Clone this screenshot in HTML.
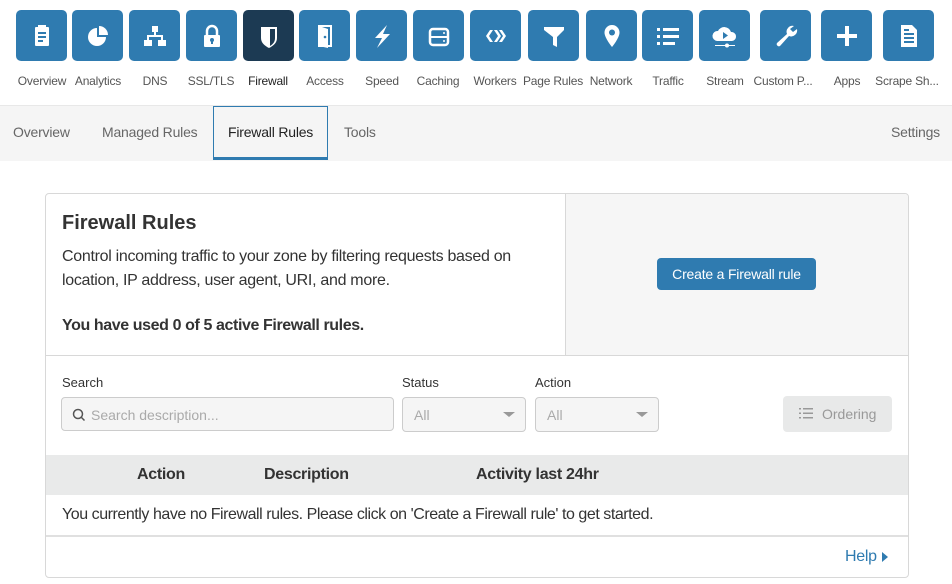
<!DOCTYPE html>
<html><head><meta charset="utf-8"><style>
*{box-sizing:border-box;margin:0;padding:0}
body{width:952px;height:584px;background:#fff;font-family:"Liberation Sans",sans-serif;color:#333;position:relative;overflow:hidden}
.a{position:absolute}
.tile{position:absolute;top:10px;width:51px;height:51px;border-radius:5px;background:#2f7bb0;display:flex;align-items:center;justify-content:center}
.tile svg{width:28px;height:28px}
.lbl{position:absolute;top:74px;font-size:12px;color:#555;text-align:center;width:70px;white-space:nowrap;letter-spacing:-0.2px}
.tab{position:absolute;top:124px;font-size:14px;color:#666;letter-spacing:-0.2px}
.sel{position:absolute;border:1px solid #ccc;border-radius:4px;background:#f5f5f5;color:#aaa;font-size:14px}
.tri{position:absolute;right:10px;top:14px;width:0;height:0;border-left:6px solid transparent;border-right:6px solid transparent;border-top:5px solid #999}
</style></head><body>
<!-- tiles -->
<div class="tile" style="left:16px"><svg viewBox="0 0 28 28" fill="#fff"><rect x="7" y="5" width="14" height="19" rx="1"/><rect x="10" y="3" width="8" height="4" fill="#fff"/><g fill="#2f7bb0"><rect x="10" y="10" width="8" height="2"/><rect x="10" y="14" width="8" height="2"/><rect x="10" y="18" width="5" height="2"/></g></svg></div>
<div class="tile" style="left:72px"><svg viewBox="0 0 28 28" fill="#fff"><path d="M13 6a9 9 0 1 0 9 9h-9z"/><path d="M15 4v9h9a9 9 0 0 0-9-9z"/></svg></div>
<div class="tile" style="left:129px"><svg viewBox="0 0 28 28" fill="#fff"><rect x="11" y="4" width="6" height="6"/><rect x="13" y="10" width="2" height="4"/><rect x="6" y="13" width="16" height="2"/><rect x="6" y="13" width="2" height="5"/><rect x="20" y="13" width="2" height="5"/><rect x="3" y="18" width="8" height="6"/><rect x="17" y="18" width="8" height="6"/></svg></div>
<div class="tile" style="left:186px"><svg viewBox="0 0 28 28"><path d="M9 13V9a5 5 0 0 1 10 0v4" fill="none" stroke="#fff" stroke-width="2.5"/><rect x="6" y="13" width="16" height="12" rx="1" fill="#fff"/><circle cx="14" cy="18" r="2" fill="#2f7bb0"/><rect x="13" y="18" width="2" height="4" fill="#2f7bb0"/></svg></div>
<div class="tile" style="left:243px;background:#1c3a53"><svg viewBox="0 0 28 28"><path d="M6 5h16v11c0 5-4 8-8 10-4-2-8-5-8-10z" fill="#fff"/><path d="M15 7h5v9c0 4-2 6-5 8z" fill="#1c3a53"/></svg></div>
<div class="tile" style="left:299px"><svg viewBox="0 0 28 28" fill="#fff"><rect x="8" y="4" width="12" height="20" fill="none" stroke="#fff" stroke-width="2"/><path d="M8 4l9 3v19l-9-2z"/><circle cx="14" cy="15" r="1.3" fill="#2f7bb0"/></svg></div>
<div class="tile" style="left:356px"><svg viewBox="0 0 28 28" fill="#fff"><path d="M19 3L7 16h7l-5 10 13-14h-7z"/></svg></div>
<div class="tile" style="left:413px"><svg viewBox="0 0 28 28"><rect x="5" y="7" width="18" height="16" rx="3" fill="none" stroke="#fff" stroke-width="2.5"/><rect x="5" y="14" width="18" height="2" fill="#fff"/><circle cx="19" cy="11" r="1" fill="#fff"/><circle cx="19" cy="19" r="1" fill="#fff"/></svg></div>
<div class="tile" style="left:470px"><svg viewBox="0 0 28 28" fill="#fff"><path d="M8 8l-4 6 4 6h3l-4-6 4-6z"/><path d="M12 8l4 6-4 6h3l4-6-4-6z"/><path d="M17 8l4 6-4 6h3l4-6-4-6z"/></svg></div>
<div class="tile" style="left:528px"><svg viewBox="0 0 28 28" fill="#fff"><path d="M4 5h20v3l-7 7v10l-4-2v-8l-9-7z"/><rect x="4" y="5" width="20" height="2"/></svg></div>
<div class="tile" style="left:586px"><svg viewBox="0 0 28 28"><path d="M14 3a7.5 7.5 0 0 1 7.5 7.5c0 5.5-7.5 14.5-7.5 14.5S6.5 16 6.5 10.5A7.5 7.5 0 0 1 14 3z" fill="#fff"/><circle cx="14" cy="10.5" r="3" fill="#2f7bb0"/></svg></div>
<div class="tile" style="left:642px"><svg viewBox="0 0 28 28" fill="#fff"><rect x="3" y="6" width="3" height="3"/><rect x="9" y="6" width="16" height="3"/><rect x="3" y="13" width="3" height="3"/><rect x="9" y="13" width="16" height="3"/><rect x="3" y="20" width="3" height="3"/><rect x="9" y="20" width="12" height="3"/></svg></div>
<div class="tile" style="left:699px"><svg viewBox="0 0 28 28"><path d="M6 19a5 5 0 0 1 1-10 7 7 0 0 1 13 1 4.5 4.5 0 0 1 1 9z" fill="#fff"/><path d="M12 10v7l5-3.5z" fill="#2f7bb0"/><rect x="4" y="23" width="20" height="1" fill="#fff"/><circle cx="16" cy="23.5" r="2" fill="#fff"/></svg></div>
<div class="tile" style="left:760px"><svg viewBox="0 0 28 28" fill="#fff"><path d="M22 4a6 6 0 0 0-7 8L5 21a2.2 2.2 0 0 0 3 3l9-10a6 6 0 0 0 8-7l-4 3-3-3z"/></svg></div>
<div class="tile" style="left:821px"><svg viewBox="0 0 28 28" fill="#fff"><rect x="12" y="4" width="4" height="20"/><rect x="4" y="12" width="20" height="4"/></svg></div>
<div class="tile" style="left:883px"><svg viewBox="0 0 28 28"><path d="M6 3h11l5 5v17H6z" fill="#fff"/><g fill="#2f7bb0"><rect x="9" y="11" width="10" height="2"/><rect x="9" y="15" width="10" height="2"/><rect x="9" y="19" width="10" height="2"/><rect x="9" y="7" width="5" height="2"/></g></svg></div>
<!-- labels -->
<div class="lbl" style="left:7px">Overview</div>
<div class="lbl" style="left:63px">Analytics</div>
<div class="lbl" style="left:120px">DNS</div>
<div class="lbl" style="left:176px">SSL/TLS</div>
<div class="lbl" style="left:233px;color:#222">Firewall</div>
<div class="lbl" style="left:290px">Access</div>
<div class="lbl" style="left:347px">Speed</div>
<div class="lbl" style="left:403px">Caching</div>
<div class="lbl" style="left:460px">Workers</div>
<div class="lbl" style="left:518px">Page Rules</div>
<div class="lbl" style="left:576px">Network</div>
<div class="lbl" style="left:633px">Traffic</div>
<div class="lbl" style="left:690px">Stream</div>
<div class="lbl" style="left:748px">Custom P...</div>
<div class="lbl" style="left:812px">Apps</div>
<div class="lbl" style="left:872px">Scrape Sh...</div>
<!-- tabs -->
<div class="a" style="left:0;top:105px;width:952px;height:56px;background:#f5f5f5;border-top:1px solid #e8e8e8"></div>
<div class="a" style="left:213px;top:106px;width:115px;height:54px;border:1px solid #2f7bb0;border-bottom:3px solid #2f7bb0;background:#f5f5f5"></div>
<div class="tab" style="left:13px">Overview</div>
<div class="tab" style="left:102px">Managed Rules</div>
<div class="tab" style="left:228px;color:#222">Firewall Rules</div>
<div class="tab" style="left:344px">Tools</div>
<div class="tab" style="left:891px">Settings</div>
<!-- card -->
<div class="a" style="left:45px;top:193px;width:864px;height:385px;border:1px solid #d8d8d8;border-radius:4px"></div>
<div class="a" style="left:565px;top:194px;width:343px;height:161px;background:#f6f6f6;border-left:1px solid #d8d8d8;border-radius:0 4px 0 0"></div>
<div class="a" style="left:46px;top:355px;width:862px;height:1px;background:#d8d8d8"></div>
<div class="a" style="left:62px;top:212px;font-size:20px;font-weight:bold;color:#333">Firewall Rules</div>
<div class="a" style="left:62px;top:245px;font-size:16px;line-height:24px;color:#333;width:480px;letter-spacing:-0.3px">Control incoming traffic to your zone by filtering requests based on location, IP address, user agent, URI, and more.</div>
<div class="a" style="left:62px;top:317px;font-size:16px;font-weight:bold;color:#333;letter-spacing:-0.4px">You have used 0 of 5 active Firewall rules.</div>
<div class="a" style="left:657px;top:258px;width:159px;height:32px;background:#2f7bb0;border-radius:4px;color:#fff;font-size:14px;text-align:center;line-height:32px;letter-spacing:-0.2px">Create a Firewall rule</div>
<!-- filters -->
<div class="a" style="left:62px;top:375px;font-size:13px;color:#333">Search</div>
<div class="a" style="left:402px;top:375px;font-size:13px;color:#333">Status</div>
<div class="a" style="left:535px;top:375px;font-size:13px;color:#333">Action</div>
<div class="sel" style="left:61px;top:397px;width:333px;height:34px"><svg class="a" style="left:10px;top:10px" width="14" height="14" viewBox="0 0 14 14"><circle cx="6" cy="6" r="4.5" fill="none" stroke="#555" stroke-width="1.5"/><path d="M9.5 9.5l3 3" stroke="#555" stroke-width="1.5"/></svg><span class="a" style="left:29px;top:9px;color:#aaa">Search description...</span></div>
<div class="sel" style="left:402px;top:397px;width:124px;height:35px"><span class="a" style="left:11px;top:9px">All</span><div class="tri"></div></div>
<div class="sel" style="left:535px;top:397px;width:124px;height:35px"><span class="a" style="left:11px;top:9px">All</span><div class="tri"></div></div>
<div class="a" style="left:783px;top:396px;width:109px;height:36px;background:#e8e9e9;border-radius:4px;color:#999;font-size:14px"><svg class="a" style="left:16px;top:12px" width="14" height="11" viewBox="0 0 14 11" fill="#999"><rect x="0" y="0" width="2" height="1.5"/><rect x="4" y="0" width="10" height="1.5"/><rect x="0" y="4.5" width="2" height="1.5"/><rect x="4" y="4.5" width="10" height="1.5"/><rect x="0" y="9" width="2" height="1.5"/><rect x="4" y="9" width="10" height="1.5"/></svg><span class="a" style="left:39px;top:10px">Ordering</span></div>
<!-- table -->
<div class="a" style="left:46px;top:455px;width:862px;height:40px;background:#e9eaea"></div>
<div class="a" style="left:137px;top:466px;font-size:16px;font-weight:bold;letter-spacing:-0.3px">Action</div>
<div class="a" style="left:264px;top:466px;font-size:16px;font-weight:bold;letter-spacing:-0.3px">Description</div>
<div class="a" style="left:476px;top:466px;font-size:16px;font-weight:bold;letter-spacing:-0.3px">Activity last 24hr</div>
<div class="a" style="left:62px;top:506px;font-size:16px;color:#333;letter-spacing:-0.45px;white-space:nowrap">You currently have no Firewall rules. Please click on 'Create a Firewall rule' to get started.</div>
<div class="a" style="left:46px;top:535px;width:862px;height:2px;background:#e0e0e0"></div>
<div class="a" style="left:845px;top:548px;font-size:16px;color:#2f7bb0;letter-spacing:-0.3px">Help</div>
<div class="a" style="left:882px;top:552px;width:0;height:0;border-top:5px solid transparent;border-bottom:5px solid transparent;border-left:6px solid #2f7bb0"></div>
</body></html>
